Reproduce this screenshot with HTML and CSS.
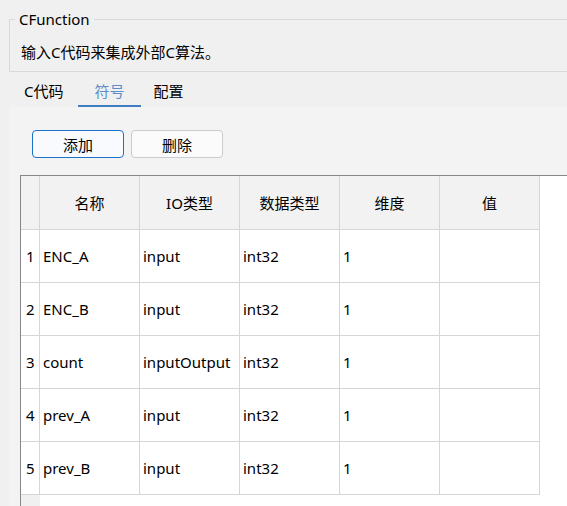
FILE: index.html
```html
<!DOCTYPE html>
<html lang="zh-CN">
<head>
<meta charset="utf-8">
<title>CFunction</title>
<link rel="stylesheet" href="styles.css">
</head>
<body>
  <fieldset class="group">
    <legend class="group-title">CFunction</legend>
    <p class="group-desc">输入C代码来集成外部C算法。</p>
  </fieldset>

  <nav class="tabs">
    <span class="tab">C代码</span>
    <span class="tab tab-active">符号</span>
    <span class="tab">配置</span>
  </nav>

  <section class="panel">
    <div class="toolbar">
      <button class="btn btn-default">添加</button>
      <button class="btn">删除</button>
    </div>

    <div class="grid-view">
      <table class="grid">
        <thead>
          <tr>
            <th class="corner"></th>
            <th>名称</th>
            <th>IO类型</th>
            <th>数据类型</th>
            <th>维度</th>
            <th>值</th>
          </tr>
        </thead>
        <tbody>
          <tr><td class="rownum">1</td><td>ENC_A</td><td>input</td><td>int32</td><td>1</td><td></td></tr>
          <tr><td class="rownum">2</td><td>ENC_B</td><td>input</td><td>int32</td><td>1</td><td></td></tr>
          <tr><td class="rownum">3</td><td>count</td><td>inputOutput</td><td>int32</td><td>1</td><td></td></tr>
          <tr><td class="rownum">4</td><td>prev_A</td><td>input</td><td>int32</td><td>1</td><td></td></tr>
          <tr><td class="rownum">5</td><td>prev_B</td><td>input</td><td>int32</td><td>1</td><td></td></tr>
        </tbody>
      </table>
    </div>
  </section>
</body>
</html>
```

FILE: styles.css
```css
* {
  box-sizing: border-box;
}

html,
body {
  height: 100%;
}

body {
  margin: 0;
  background: #f0f0f0;
  color: #000;
  font-family: "Noto Sans", "Noto Sans CJK SC", sans-serif;
  font-size: 15px;
  overflow: hidden;
  display: flex;
  flex-direction: column;
}

/* group box with caption */
.group {
  margin: 11px 0 0 9px;
  padding: 0 0 0 11px;
  height: 61px;
  border: 1px solid #d9d9d9;
  border-right: none;
  min-width: 0;
}

.group-title {
  margin-left: -6px;
  padding: 0 4px;
  line-height: 16px;
}

.group-desc {
  margin: 0;
  padding-top: 16px;
  line-height: 18px;
}

/* tab strip */
.tabs {
  display: flex;
  margin: 6px 0 0 8px;
  height: 29px;
}

.tab {
  padding: 0 16px;
  line-height: 27px;
  border-bottom: 2px solid transparent;
}

.tab + .tab {
  margin-left: -1px;
}

.tab:last-child {
  padding-left: 14px;
}

.tab-active {
  color: #5a8fc8;
  border-bottom-color: #3d7fc2;
}

/* tab page */
.panel {
  flex: 1;
  margin-left: 9px;
  background: #f3f3f3;
  padding: 23px 0 0 11px;
  display: flex;
  flex-direction: column;
  min-height: 0;
}

.toolbar {
  display: flex;
  gap: 7px;
  margin-left: 12px;
}

.btn {
  width: 92px;
  height: 28px;
  font: inherit;
  color: #000;
  background: #fbfbfb;
  border: 1px solid #c9ccd1;
  border-radius: 4px;
  padding: 0;
}

.btn-default {
  border-color: #1a73c9;
  background: #f8fafd;
}

/* data grid */
.grid-view {
  margin-top: 17px;
  flex: 1;
  border-left: 1px solid #86868c;
  border-top: 1px solid #86868c;
  background: linear-gradient(to right, #f0f0f0 19px, #fff 19px);
}

.grid {
  border-collapse: separate;
  border-spacing: 0;
  table-layout: fixed;
  width: 519px;
}

.grid th,
.grid td {
  width: 100px;
  padding: 0 3px;
  border-right: 1px solid #d6d6d6;
  border-bottom: 1px solid #d6d6d6;
  white-space: nowrap;
  overflow: hidden;
}

.grid th {
  height: 54px;
  background: #f2f2f2;
  font-weight: normal;
  text-align: center;
}

.grid td {
  height: 53px;
  background: #fff;
  text-align: left;
}

.grid .corner,
.grid .rownum {
  width: 19px;
}

.grid .rownum {
  padding: 0 0 0 5px;
}
```
